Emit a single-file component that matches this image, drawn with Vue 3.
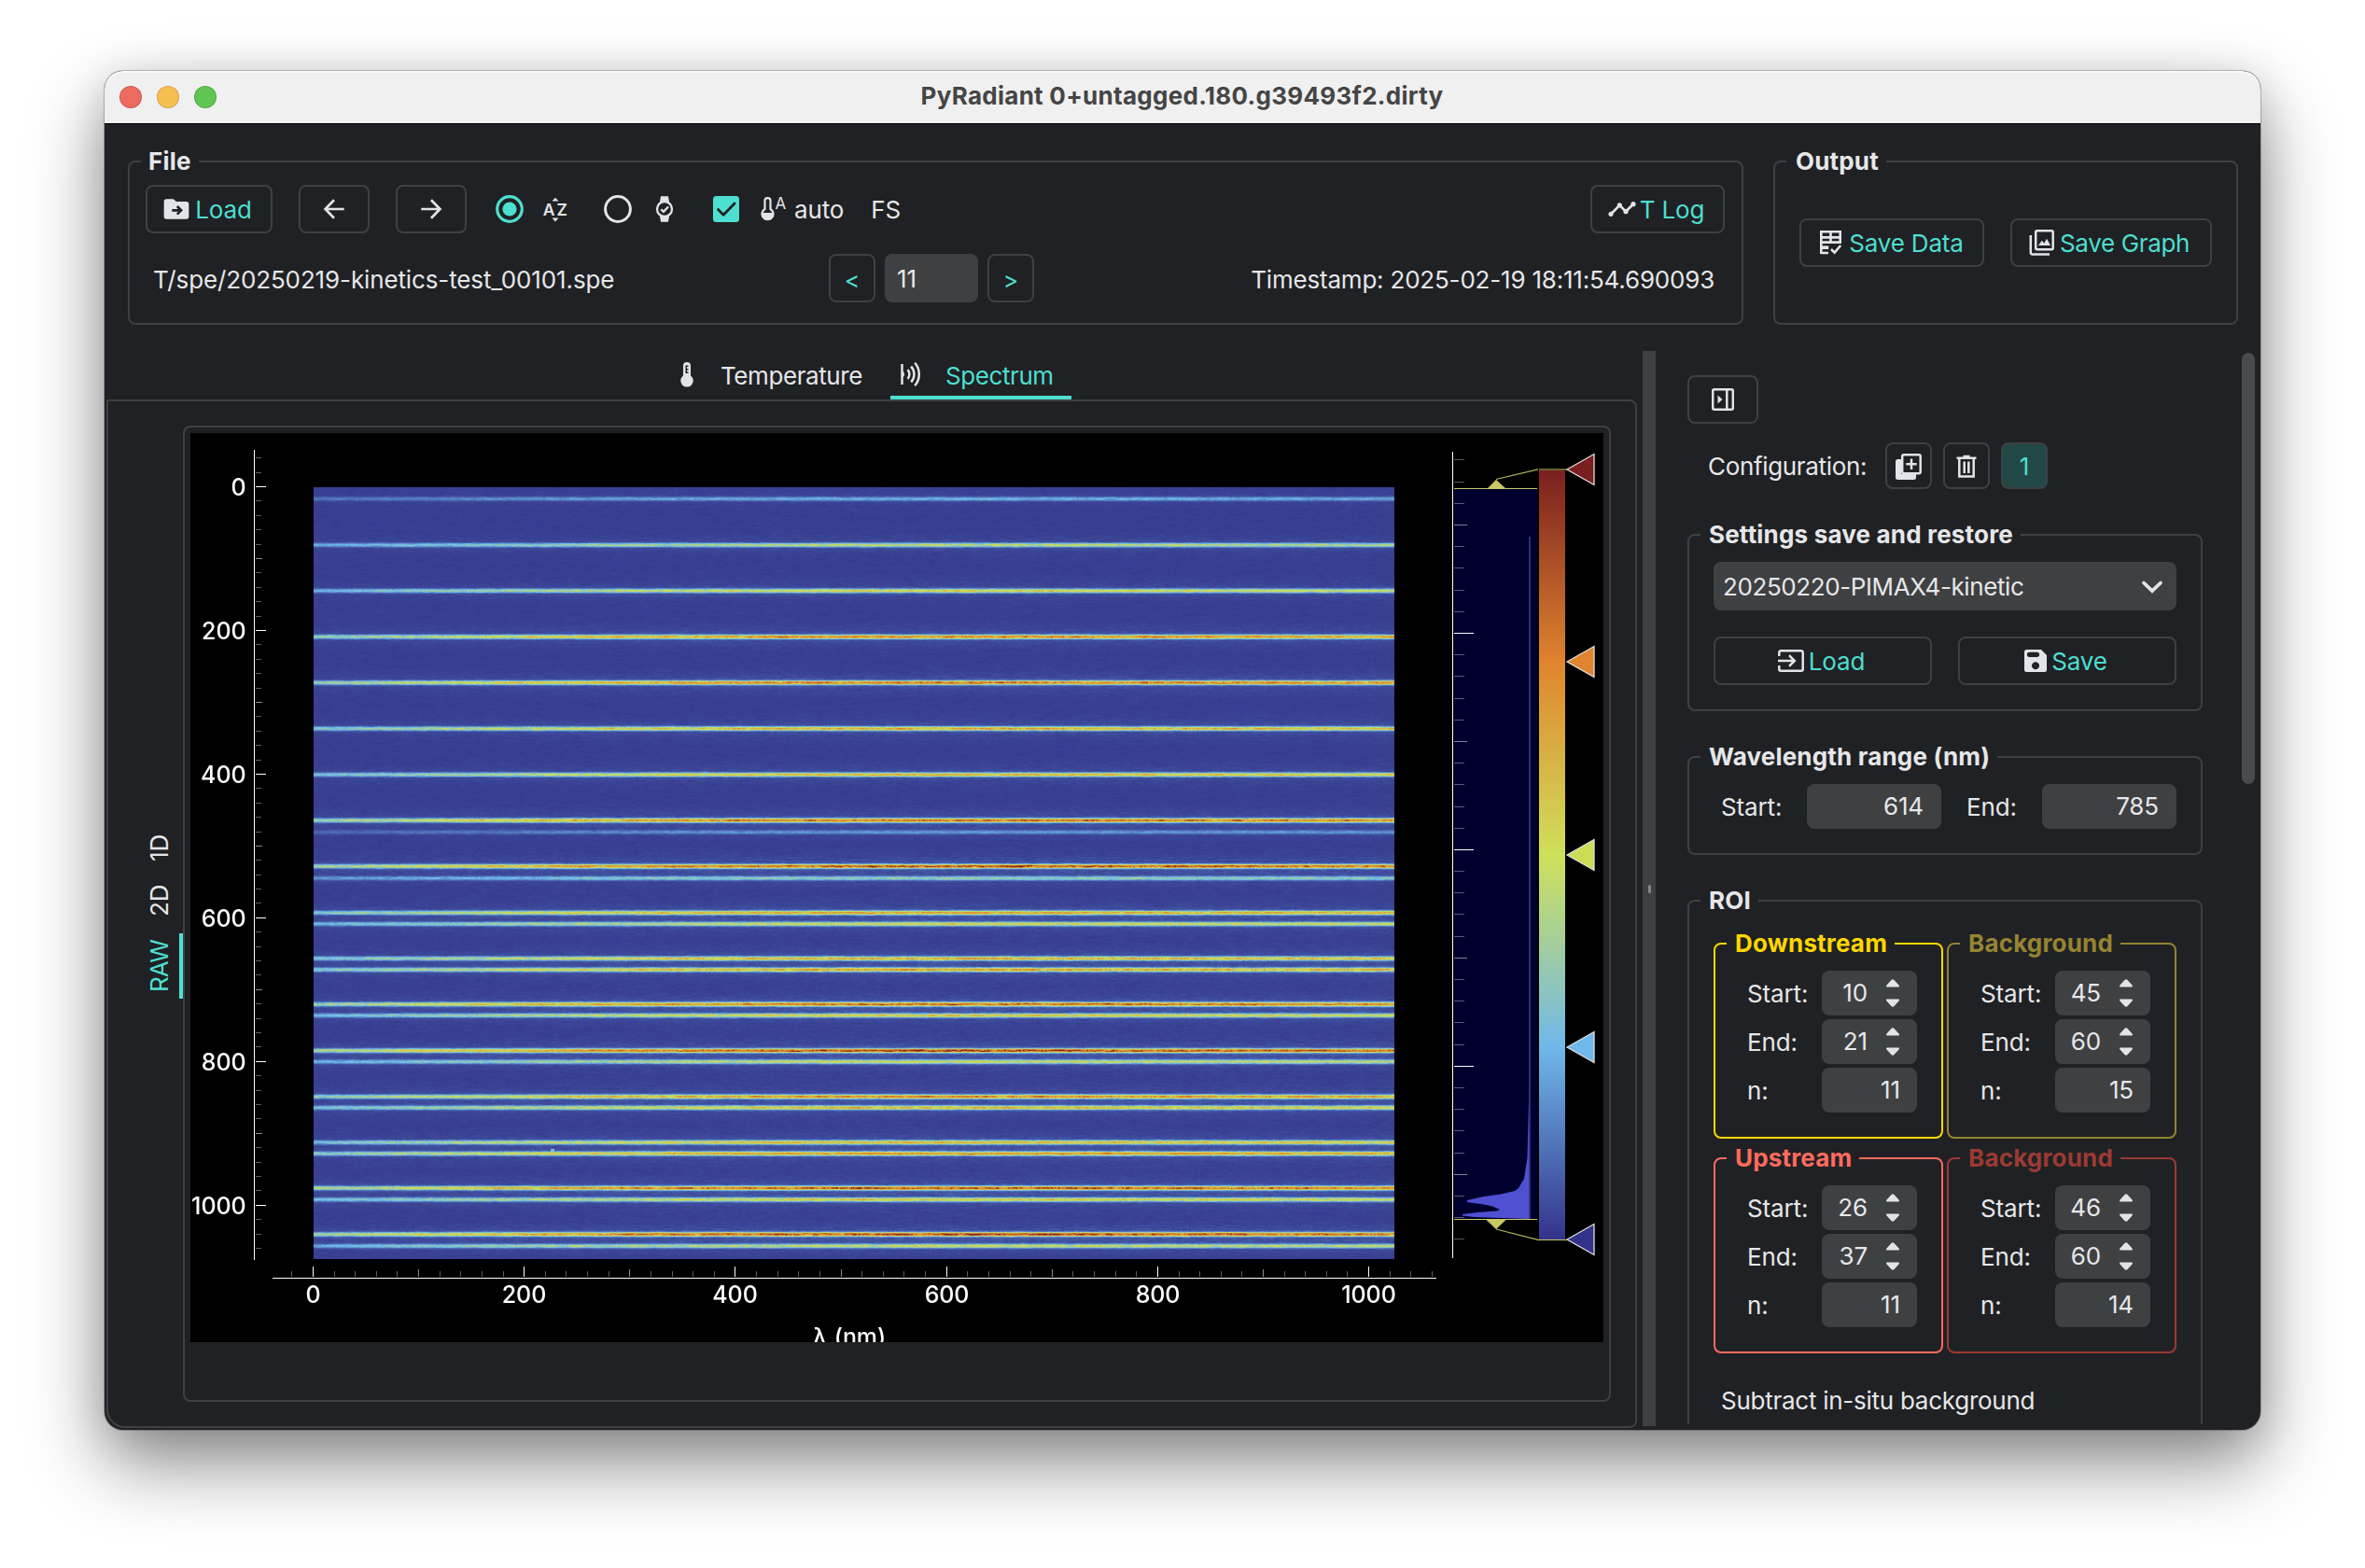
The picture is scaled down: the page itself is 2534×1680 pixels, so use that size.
<script setup>
import { ref, onMounted } from 'vue'

const rois = [
  { title: 'Downstream', cls: 'down', start: 10, end: 21, n: 11 },
  { title: 'Background', cls: 'down-bg', start: 45, end: 60, n: 15 },
  { title: 'Upstream', cls: 'up', start: 26, end: 37, n: 11 },
  { title: 'Background', cls: 'up-bg', start: 46, end: 60, n: 14 },
]

// axis ticks: [position, kind] where kind is 0 minor, 1 half, 2 labelled
const yTicks = []
for (let v = -40; v <= 1060; v += 20) {
  yTicks.push({ v, y: Math.round(522 + v * 0.7698) - 0.5, k: v % 200 === 0 ? 2 : v % 100 === 0 ? 1 : 0 })
}
const xTicks = []
for (let v = -20; v <= 1060; v += 20) {
  xTicks.push({ v, x: Math.round(336 + v * 1.1311) - 0.5, k: v % 200 === 0 ? 2 : v % 100 === 0 ? 1 : 0 })
}
const hTicks = []
for (let k = -8; k <= 28; k++) {
  hTicks.push({ y: Math.round(679 + k * 23.19) - 0.5, k: k % 10 === 0 ? 2 : k % 5 === 0 ? 1 : 0 })
}
const handles = [
  { y: 503, c: '#7a1f1f' },
  { y: 709, c: '#e0842f' },
  { y: 916, c: '#cddc55' },
  { y: 1122, c: '#70b8ea' },
  { y: 1328, c: '#33338a' },
]

// spectral streaks: [row in data px, peak level]
const streaks = [
  [12.5, 0.2], [62, 0.4], [111, 0.47], [160.3, 0.66], [209.5, 0.7], [258.7, 0.58], [308, 0.53],
  [357, 0.72], [369.6, 0.15], [406.2, 0.77], [419, 0.31], [456, 0.59], [468, 0.46], [505, 0.56],
  [517, 0.59], [554, 0.72], [566, 0.49], [603.7, 0.8], [615.6, 0.43], [653, 0.64], [664.8, 0.53],
  [702, 0.54], [714, 0.62], [751, 0.76], [763.3, 0.49], [800.5, 0.78], [813, 0.43],
]
const stops = [
  [51, 51, 138], [112, 184, 234], [205, 220, 85], [224, 132, 47], [122, 31, 31],
]
const image = ref(null)

onMounted(() => {
  const W = 1158
  const H = 827
  const ctx = image.value.getContext('2d')
  const data = ctx.createImageData(W, H)
  let seed = 20250219
  const rnd = () => {
    seed = (Math.imul(seed, 1664525) + 1013904223) >>> 0
    return seed / 4294967296
  }
  const env = x => {
    const t = x / W
    return 0.45 + 0.55 * Math.sin(Math.min(t / 0.62, 1) * Math.PI / 2) - (t > 0.62 ? (t - 0.62) * 0.3 : 0)
  }
  const noise = new Float32Array(W)
  for (let y = 0; y < H; y++) {
    let slow = 0
    for (let x = 0; x < W; x++) {
      if (x % 2 === 0) slow = slow * 0.6 + (rnd() - 0.5) * 0.8
      if (y % 2 === 0 || rnd() < 0.25) noise[x] = slow
    }
    const near = streaks.filter(s => Math.abs(s[0] - y) < 40)
    for (let x = 0; x < W; x++) {
      const e = env(x)
      let core = 0
      let halo = 0
      for (const [sy, a] of near) {
        const d = Math.abs(y + 0.5 - sy)
        core += a * Math.exp(-Math.pow(d / 2.15, 2.3))
        halo += 0.09 * a * Math.exp(-d / 6)
      }
      const n = noise[x]
      let v = 0.02 + n * 0.01 + (core * (1 + n * 0.3) + halo * (1 + n * 0.6)) * e
      if (Math.abs(x - 255.5) < 2 && Math.abs(y - 710) < 1.5) v = 0.27
      v = Math.max(0, Math.min(0.999, v)) * 4
      const i = Math.floor(v)
      const f = v - i
      const o = (y * W + x) * 4
      for (let c = 0; c < 3; c++) data.data[o + c] = stops[i][c] + (stops[i + 1][c] - stops[i][c]) * f
      data.data[o + 3] = 255
    }
  }
  ctx.putImageData(data, 0, 0)
})
</script>

<template>
  <div class="desk">
    <div class="window">
      <header class="titlebar">
        <i class="light red"></i><i class="light amber"></i><i class="light green"></i>
        <h1>PyRadiant 0+untagged.180.g39493f2.dirty</h1>
      </header>

      <section class="top">
        <div class="group file">
          <span class="legend">File</span>
          <div class="row">
            <button class="btn load">
              <svg width="32" height="32" viewBox="0 0 24 24"><path fill="#e1e4e9" d="M4 4h5.500l2.500 2h8a2 2 0 0 1 2 2v10a2 2 0 0 1-2 2H4a2 2 0 0 1-2-2V6a2 2 0 0 1 2-2z" /><path d="M8.500 13h6.500M12.600 9.800l3.200 3.200-3.200 3.200" fill="none" stroke="#202124" stroke-width="2" /></svg>
              <span>Load</span>
            </button>
            <button class="btn nav"><svg width="32" height="32" viewBox="0 0 24 24"><path d="M20 12H5.200M12 4.700L4.900 12l7.100 7.300" class="s2" /></svg></button>
            <button class="btn nav"><svg width="32" height="32" viewBox="0 0 24 24"><path d="M4 12h14.800M12 4.700l7.100 7.300-7.100 7.300" class="s2" /></svg></button>
            <svg class="radio1" width="30" height="30"><circle cx="15" cy="15" r="13.300" fill="none" stroke="#4ddfcf" stroke-width="3.200" /><circle cx="15" cy="15" r="7.600" fill="#4ddfcf" /></svg>
            <svg class="az" width="28" height="28" viewBox="0 0 28 28"><path d="M10.500 5.500L14 1.800l3.500 3.700zM10.500 23.500l3.500 4 3.500-4z" fill="#e1e4e9" /><text x=".8" y="21" class="azt">A</text><text x="15.600" y="21" class="azt">Z</text></svg>
            <svg class="radio2" width="30" height="30"><circle cx="15" cy="15" r="13.400" fill="none" stroke="#e1e4e9" stroke-width="3" /></svg>
            <svg class="watch" width="28" height="28" viewBox="0 0 28 28"><g class="w"><circle cx="14" cy="14" r="8" /><path d="M10 7l1-5.500h6l1 5.500M11 3.800h6M10 21l1 5.500h6l1-5.500M11 24.200h6" /><path d="M10.200 14.200l2.700 2.700 5.200-5.400" /></g></svg>
            <svg class="check" width="28" height="28"><rect width="28" height="28" rx="3.500" fill="#4ddfcf" /><path d="M5.500 14.500l5.700 5.700L23 8" fill="none" stroke="#202124" stroke-width="2.800" stroke-linecap="round" stroke-linejoin="round" /></svg>
            <svg class="therm" width="28" height="28" viewBox="0 0 28 28"><path d="M4.500 14V5.200a3 3 0 0 1 6 0V14a6 6 0 1 1-6 0z" fill="none" stroke="#e1e4e9" stroke-width="2.200" /><path d="M2 18h11a5.600 5.600 0 1 1-11 0z" fill="#e1e4e9" /><text x="15.500" y="14" class="small">A</text></svg>
            <span class="auto">auto</span>
            <span>FS</span>
            <button class="btn tlog">
              <svg width="32" height="32" viewBox="0 0 24 24"><path fill="#e1e4e9" d="M23 8c0 1.100-.9 2-2 2-.18 0-.35-.02-.51-.07l-3.560 3.550c.05.16.07.34.07.52 0 1.100-.9 2-2 2s-2-.9-2-2c0-.18.02-.36.07-.52l-2.550-2.550c-.16.05-.34.07-.52.07s-.36-.02-.52-.07l-4.550 4.560c.05.16.07.33.07.51 0 1.100-.9 2-2 2s-2-.9-2-2 .9-2 2-2c.18 0 .35.02.51.07l4.560-4.550C8.020 9.360 8 9.180 8 9c0-1.100.9-2 2-2s2 .9 2 2c0 .18-.02.36-.07.52l2.550 2.550c.16-.05.34-.07.52-.07s.36.02.52.07l3.550-3.560C19.020 8.350 19 8.180 19 8c0-1.100.9-2 2-2s2 .9 2 2z" /></svg>
              <span>T Log</span>
            </button>
          </div>
          <div class="row second">
            <span class="path">T/spe/20250219-kinetics-test_00101.spe</span>
            <button class="btn step">&lt;</button>
            <span class="input frame-no">11</span>
            <button class="btn step">&gt;</button>
            <span class="stamp">Timestamp: 2025-02-19 18:11:54.690093</span>
          </div>
        </div>

        <div class="group output">
          <span class="legend">Output</span>
          <button class="btn sdata">
            <svg width="24" height="26" viewBox="0 0 24 26"><g fill="none" stroke="#e1e4e9"><path stroke-width="2.600" d="M1.300 25V1.300h20.400V12.600H1.300M1.300 7.400h20.400M11.500 1.300v11.300M1.300 24h7.700" /><path stroke-width="3.600" d="M1.300 18.200h8" /><path stroke-width="2.600" d="M12 20l3.600 3.600 6.600-7.600" /></g></svg>
            <span>Save Data</span>
          </button>
          <button class="btn sgraph">
            <svg width="28" height="28" viewBox="0 0 28 28"><g fill="none" stroke="#e1e4e9" stroke-width="2.500"><rect x="7.200" y="1.300" width="18.500" height="20" rx="1.500" /><path d="M1.800 6v18.700a1.800 1.800 0 0 0 1.800 1.800H22" /></g><path d="M10 17l3.800-5.200 2.400 3 2.800-5 4 7.200z" fill="#e1e4e9" /></svg>
            <span>Save Graph</span>
          </button>
        </div>
      </section>

      <section class="main">
        <div class="left">
          <nav class="tabs">
            <div class="tab one">
              <svg width="28" height="28" viewBox="0 0 28 28"><path d="M10 15.500V5a4 4 0 0 1 8 0v10.500a6.700 6.700 0 1 1-8 0z" fill="#e1e4e9" /><path d="M12.500 13V4.500h3V6h-1.500v2h1.500v1.500h-1.500v2h1.500V13z" fill="#202124" /></svg>
              <span>Temperature</span>
            </div>
            <div class="tab two active">
              <svg width="28" height="28" viewBox="0 0 28 28"><g fill="none" stroke="#e1e4e9" stroke-width="2.500"><path d="M4.500 3v22" /><path d="M10.500 9.200a7 7 0 0 1 0 9.600" /><path d="M14.200 5.600a12.500 12.500 0 0 1 0 16.800" /><path d="M18.200 1.800a18.500 18.500 0 0 1 0 24.400" /></g><path d="M5 10.500a4 4 0 0 1 0 7z" fill="#e1e4e9" /></svg>
              <span>Spectrum</span>
            </div>
          </nav>
          <div class="pane">
            <nav class="side">
              <span class="st a">1D</span>
              <span class="st b">2D</span>
              <span class="st c">RAW</span>
            </nav>
            <div class="frame">
              <div class="plot">
                <canvas ref="image" width="1158" height="827"></canvas>
                <svg class="overlay" width="1514" height="974" viewBox="204 464 1514 974">
                  <defs>
                    <linearGradient id="ramp" x1="0" y1="0" x2="0" y2="1">
                      <stop offset="0" stop-color="#7a1f1f" /><stop offset=".25" stop-color="#e0842f" />
                      <stop offset=".5" stop-color="#cfe05a" /><stop offset=".75" stop-color="#70b8ea" />
                      <stop offset="1" stop-color="#33338a" />
                    </linearGradient>
                  </defs>
                  <g shape-rendering="crispEdges">
                    <path d="M272.500 482V1350M292 1369.500H1539M1556.500 484V1348" stroke="#fff" />
                    <line v-for="t in yTicks" :key="'y' + t.v" x1="274" :x2="[280, 281, 285][t.k]" :y1="t.y" :y2="t.y" :class="'t' + t.k" />
                    <line v-for="t in xTicks" :key="'x' + t.v" :y1="[1362, 1360, 1357][t.k]" y2="1368" :x1="t.x" :x2="t.x" :class="'t' + t.k" />
                  </g>
                  <text v-for="t in yTicks.filter(t => t.k === 2)" :key="'yl' + t.v" x="263.500" :y="t.y + 9.200" text-anchor="end" class="lab">{{ t.v }}</text>
                  <text v-for="t in xTicks.filter(t => t.k === 2)" :key="'xl' + t.v" :x="t.x" y="1396" text-anchor="middle" class="lab">{{ t.v }}</text>
                  <text x="910" y="1441" text-anchor="middle" class="lab">λ (nm)</text>

                  <rect x="1558" y="523" width="89" height="783" fill="#00002f" />
                  <path d="M1638.500 575V1160L1636.500 1240L1633 1263L1627 1273L1623 1276L1608 1279.500L1590 1282L1572 1286L1572 1288L1590 1290.500L1599 1292.500L1607 1296L1604 1297.500L1583 1299L1567 1301L1567 1302.500L1580 1304L1639.500 1306V575z" fill="#5050d2" />
                  <path d="M1639 575V1306" stroke="#2e2e74" stroke-width="1.600" />
                  <g shape-rendering="crispEdges">
                    <line v-for="(t, i) in hTicks" :key="'h' + i" x1="1558" :x2="[1569, 1572, 1579][t.k]" :y1="t.y" :y2="t.y" :class="'h' + t.k" />
                    <path d="M1558 523.500H1647M1558 1306.500H1647" stroke="#c8c864" />
                    <rect x="1649" y="504" width="28" height="824" fill="url(#ramp)" />
                    <path d="M1649 503H1679" stroke="#66662e" stroke-width="2" />
                    <path d="M1647 1328.500H1679" stroke="#c8c864" />
                  </g>
                  <path d="M1603 513.500L1648 502.800M1603 1317L1648 1328.400" stroke="#b4b45a" stroke-width="1.200" />
                  <path d="M1603 514l10.500 9.500h-20zM1592.500 1307h21l-10.500 10z" fill="#c8c864" />
                  <path v-for="h in handles" :key="h.y" :d="`M1679 ${h.y}L1708 ${h.y - 16.5}V${h.y + 16.5}z`" :fill="h.c" stroke="#e0e0e0" stroke-width="1.300" />
                </svg>
              </div>
            </div>
          </div>
        </div>

        <div class="splitter"><i></i></div>

        <div class="right">
          <div class="panel">
            <button class="btn collapse">
              <svg width="24" height="24" viewBox="0 0 24 24"><rect x="1.200" y="1.300" width="21.600" height="21.400" rx="1.500" class="s25" /><path d="M16.300 1v22" class="s25" /><path d="M6.500 7.500l5 4.500-5 4.500z" fill="#e1e4e9" /></svg>
            </button>
            <div class="config">
              <span class="tight">Configuration:</span>
              <button class="btn sq"><svg width="28" height="28" viewBox="0 0 28 28"><path d="M2.500 6H6v16h16v3.500a2.500 2.500 0 0 1-2.500 2.500H2.500A2.500 2.500 0 0 1 0 25.500v-17A2.500 2.500 0 0 1 2.500 6z" fill="#e1e4e9" /><rect x="7.200" y="1.300" width="19.500" height="20" rx="1.800" class="s25" /><path d="M17 5.500v11.500M11.300 11.300h11.400" class="s25" /></svg></button>
              <button class="btn sq"><svg width="24" height="26" viewBox="0 0 24 26"><path d="M1.500 3.800h21M8.500 2h7M4.300 4v19.500h15.400V4M9.700 7.500v12.500M14.300 7.500v12.500" class="s25" /></svg></button>
              <button class="btn sq on"><span>1</span></button>
            </div>

            <div class="group settings">
              <span class="legend">Settings save and restore</span>
              <div class="combo"><span>20250220-PIMAX4-kinetic</span><svg width="24" height="16" viewBox="0 0 24 16"><path d="M3 3.500l9 8.700 9-8.700" fill="none" stroke="#e1e4e9" stroke-width="3.800" stroke-linecap="round" /></svg></div>
              <div class="pair">
                <button class="btn"><svg width="28" height="24" viewBox="0 0 28 24"><path d="M1.300 7V3a1.700 1.700 0 0 1 1.700-1.700h22a1.700 1.700 0 0 1 1.700 1.700v18a1.700 1.700 0 0 1-1.700 1.700H3A1.700 1.700 0 0 1 1.300 21v-4M0 12h17M12 6.200l5.800 5.800-5.800 5.800" class="s25" /></svg><span>Load</span></button>
                <button class="btn"><svg width="24" height="24" viewBox="0 0 24 24"><path fill="#e1e4e9" fill-rule="evenodd" d="M2.500 0H18l6 6v15.500a2.500 2.500 0 0 1-2.500 2.500h-19A2.500 2.500 0 0 1 0 21.500v-19A2.500 2.500 0 0 1 2.500 0zM5.500 2.700a2.600 2.600 0 0 0 0 5.200h8a2.600 2.600 0 0 0 0-5.200zM12 13.200a4 4 0 1 0 .01 0z" /></svg><span>Save</span></button>
              </div>
            </div>

            <div class="group wave">
              <span class="legend">Wavelength range (nm)</span>
              <span class="wl">Start:</span><span class="input num">614</span>
              <span class="wl e">End:</span><span class="input num">785</span>
            </div>

            <div class="group roi">
              <span class="legend">ROI</span>
              <div class="grid">
                <div v-for="(r, i) in rois" :key="i" class="group sub" :class="r.cls">
                  <span class="legend">{{ r.title }}</span>
                  <div class="f"><label>Start:</label><span class="input spin">{{ r.start }}<svg width="16" height="32" viewBox="0 0 16 32"><path d="M1.500 9.500q-1-1 0-2L6.500 2Q8 .6 9.500 2l5 5.500q1 1 0 2zM1.500 22.500q-1 1 0 2L6.500 30q1.500 1.400 3 0l5-5.500q1-1 0-2z" fill="#e1e4e9" /></svg></span></div>
                  <div class="f"><label>End:</label><span class="input spin">{{ r.end }}<svg width="16" height="32" viewBox="0 0 16 32"><path d="M1.500 9.500q-1-1 0-2L6.500 2Q8 .6 9.500 2l5 5.500q1 1 0 2zM1.500 22.500q-1 1 0 2L6.500 30q1.500 1.400 3 0l5-5.500q1-1 0-2z" fill="#e1e4e9" /></svg></span></div>
                  <div class="f"><label>n:</label><span class="input spin">{{ r.n }}</span></div>
                </div>
              </div>
              <p class="sub-bg">Subtract in-situ background</p>
            </div>
          </div>
          <div class="scroll"></div>
        </div>
      </section>
    </div>
  </div>
</template>

<style>
body { background: #fff; }
</style>

<style scoped>
* { box-sizing: border-box; }
.desk { width: 2534px; height: 1680px; padding: 76px 112px; overflow: hidden; background: #fff; font: 400 26px/32px Inter, sans-serif; letter-spacing: -0.13px; color: #e6e7ea; }
.window { width: 2310px; height: 1456px; border-radius: 20px; background: #202124; box-shadow: 0 0 0 1px rgba(0,0,0,.22), 0 36px 80px rgba(0,0,0,.46), 0 6px 44px rgba(0,0,0,.12); display: flex; flex-direction: column; overflow: hidden; }
.titlebar { height: 57px; flex: none; background: #f0f0f0; border-bottom: 1px solid #000; border-radius: 20px 20px 0 0; box-shadow: inset 0 2px 0 #fafafa; display: flex; align-items: center; padding-left: 16px; gap: 16px; }
.light { width: 24px; height: 24px; border-radius: 50%; border: 1px solid rgba(0,0,0,.14); }
.red { background: #ed6a5e; }
.amber { background: #f5bf4f; }
.green { background: #61c554; }
h1 { margin: 0 0 2px; flex: 1; padding-right: 137px; text-align: center; font-size: 26px; font-weight: 700; letter-spacing: .28px; color: #454545; line-height: 32px; }

.top { height: 243px; flex: none; display: flex; gap: 32px; padding: 39px 0 0 25px; }
.group { position: relative; border: 2px solid #3f4042; border-radius: 8px; }
.legend { position: absolute; top: -17px; left: 12px; padding: 0 8px 0 9px; background: #202124; font-weight: 700; letter-spacing: .18px; line-height: 32px; white-space: nowrap; }
.file { width: 1731px; height: 176px; padding: 24px 18px 0 17px; }
.file .legend { padding-left: 8px; }
.output .legend { padding-left: 10px; }
.row { display: flex; align-items: center; height: 52px; }
.row > span:not(.input) { padding-top: 2px; }
.row.second > span:not(.input) { padding-top: 4px; }
.second { margin-top: 22px; }
.btn { flex: none; height: 52px; border: 2px solid #3f4042; border-radius: 8px; background: none; padding: 0; margin: 0; font: inherit; letter-spacing: inherit; color: #4ddfcf; display: flex; align-items: center; justify-content: center; }
.btn span { padding-top: 2px; }
svg { flex: none; display: block; }
.s2 { fill: none; stroke: #e1e4e9; stroke-width: 2; }
.s25 { stroke: #e1e4e9; stroke-width: 2.5; fill: none; }
.load { width: 136px; }
.load svg { margin-left: -5px; }
.load span { margin-left: 4px; }
.nav { width: 76px; margin-left: 28px; }
.radio1 { margin-left: 31px; }
.az { margin-left: 20px; }
.azt { font: 600 17.5px Inter, sans-serif; fill: #e1e4e9; }
.radio2 { margin-left: 38px; }
.watch { margin-left: 21px; }
.w { fill: none; stroke: #e1e4e9; stroke-width: 2.3; }
.check { margin-left: 38px; }
.therm { margin-left: 23px; }
.small { font: 400 17px Inter, sans-serif; fill: #e1e4e9; }
.row > .auto { margin: 0 29px 0 8px; }
.tlog { width: 144px; margin-left: auto; }
.tlog svg { margin-left: -4px; }
.tlog span { margin-left: 3px; }
.path { width: 732px; padding-left: 8px; }
.step { width: 50px; font-size: 25px; padding-top: 3px; }
.input { background: #3f4042; border-radius: 8px; display: flex; align-items: center; }
.frame-no { width: 100px; height: 52px; margin: 0 10px; padding-left: 13px; padding-top: 1px; }
.stamp { margin-left: auto; padding-right: 11px; letter-spacing: -.2px; }

.output { width: 498px; height: 176px; display: flex; padding: 60px 0 0 26px; gap: 28px; }
.sdata { width: 198px; letter-spacing: -.2px; }
.sdata span { margin-left: 7px; }
.sgraph { width: 216px; letter-spacing: -.35px; }
.sgraph svg { margin-left: -4px; }
.sgraph span { margin-left: 5px; }

.main { display: flex; height: 1156px; padding-left: 2px; }
.left { width: 1640px; }
.tabs { height: 52px; display: flex; padding-left: 608px; letter-spacing: -.42px; }
.tab { display: flex; align-items: center; height: 52px; }
.tab span { padding-top: 2px; }
.tab svg { margin-top: -3px; }
.one { width: 232px; }
.one span { margin-left: 22px; }
.two { width: 194px; padding-left: 8px; border-bottom: 4px solid #4ddfcf; }
.two svg { margin-top: 1px; }
.two span { margin-left: 23px; padding-top: 6px; }
.active { color: #4ddfcf; }
.pane { height: 1102px; border: 2px solid #3f4042; border-radius: 0 8px 8px 20px; padding: 26px 26px 26px 0; display: flex; }
.side { width: 80px; padding-top: 423px; display: flex; flex-direction: column; align-items: flex-end; }
.st { writing-mode: vertical-rl; transform: rotate(180deg); text-align: center; line-height: 40px; width: 45px; }
.a { height: 58px; }
.b { height: 56px; }
.c { height: 70px; margin-top: 7px; color: #4ddfcf; letter-spacing: -1px; border-left: 4px solid #4ddfcf; }
.a, .b { padding-left: 4px; }
.frame { width: 1530px; height: 1046px; border: 2px solid #3f4042; border-radius: 8px; padding: 6px; }
.plot { position: relative; width: 1514px; height: 974px; background: #000; overflow: hidden; }
canvas { position: absolute; left: 132px; top: 58px; }
.overlay { position: absolute; left: 0; top: 0; }
.lab { font: 500 25px Inter, sans-serif; letter-spacing: -.1px; fill: #fff; }
.t0 { stroke: #5c5c5c; }
.t1 { stroke: #8c8c8c; }
.t2 { stroke: #fff; }
.h0 { stroke: #fff; stroke-opacity: .34; }
.h1 { stroke: #fff; stroke-opacity: .5; }
.h2 { stroke: #fff; }

.splitter { width: 14px; height: 1152px; margin-left: 6px; background: #3f4042; display: flex; align-items: center; justify-content: center; }
.splitter i { width: 3px; height: 9px; border-radius: 2px; background: #85878a; }
.right { width: 646px; height: 1150px; display: flex; overflow: hidden; }
.panel { width: 628px; padding: 26px 0 0 34px; }
.scroll { width: 14px; height: 462px; margin-top: 2px; border-radius: 7px; background: #4a4b4d; }
.collapse { width: 76px; }
.config { display: flex; align-items: center; height: 50px; margin-top: 20px; padding-left: 22px; gap: 12px; }
.tight { width: 178px; letter-spacing: -.33px; padding-top: 2px; }
.sq { width: 50px; height: 50px; }
.sq svg { position: relative; top: 1px; }
.on { background: #224846; }
.settings { width: 552px; height: 190px; margin-top: 48px; padding: 28px 26px 0; }
.combo { height: 52px; background: #3f4042; border-radius: 8px; display: flex; align-items: center; justify-content: space-between; padding: 1px 14px 0 10px; letter-spacing: -.4px; }
.pair { display: flex; gap: 28px; margin-top: 28px; }
.pair .btn { width: 234px; }
.pair svg { margin-left: -3px; }
.pair span { margin-left: 5px; }
.wave { width: 552px; height: 106px; margin-top: 48px; padding: 28px 0 0 26px; display: flex; }
.wl { width: 100px; padding-left: 8px; line-height: 50px; }
.wl.e { width: 108px; padding-left: 27px; }
.num { width: 144px; height: 48px; justify-content: flex-end; padding-right: 19px; }
.roi { width: 552px; height: 620px; margin-top: 48px; padding: 44px 26px 0; }
.grid { display: grid; grid-template-columns: 246px 246px; gap: 20px 4px; }
.sub { height: 210px; padding: 28px 0 0 34px; display: flex; flex-direction: column; gap: 4px; }
.f { display: flex; height: 48px; }
.f label { width: 80px; line-height: 50px; }
.spin { width: 102px; height: 48px; justify-content: flex-end; padding-right: 18px; gap: 19px; }
.down { border-color: #ffd700; }
.down .legend { color: #ffd700; }
.down-bg { border-color: #958431; }
.down-bg .legend { color: #958431; }
.up { border-color: #ff6b5e; }
.up .legend { color: #ff6b5e; }
.up-bg { border-color: #9b3a33; }
.up-bg .legend { color: #9b3a33; }
.sub-bg { margin: 35px 0 0 8px; letter-spacing: -.26px; }
</style>
